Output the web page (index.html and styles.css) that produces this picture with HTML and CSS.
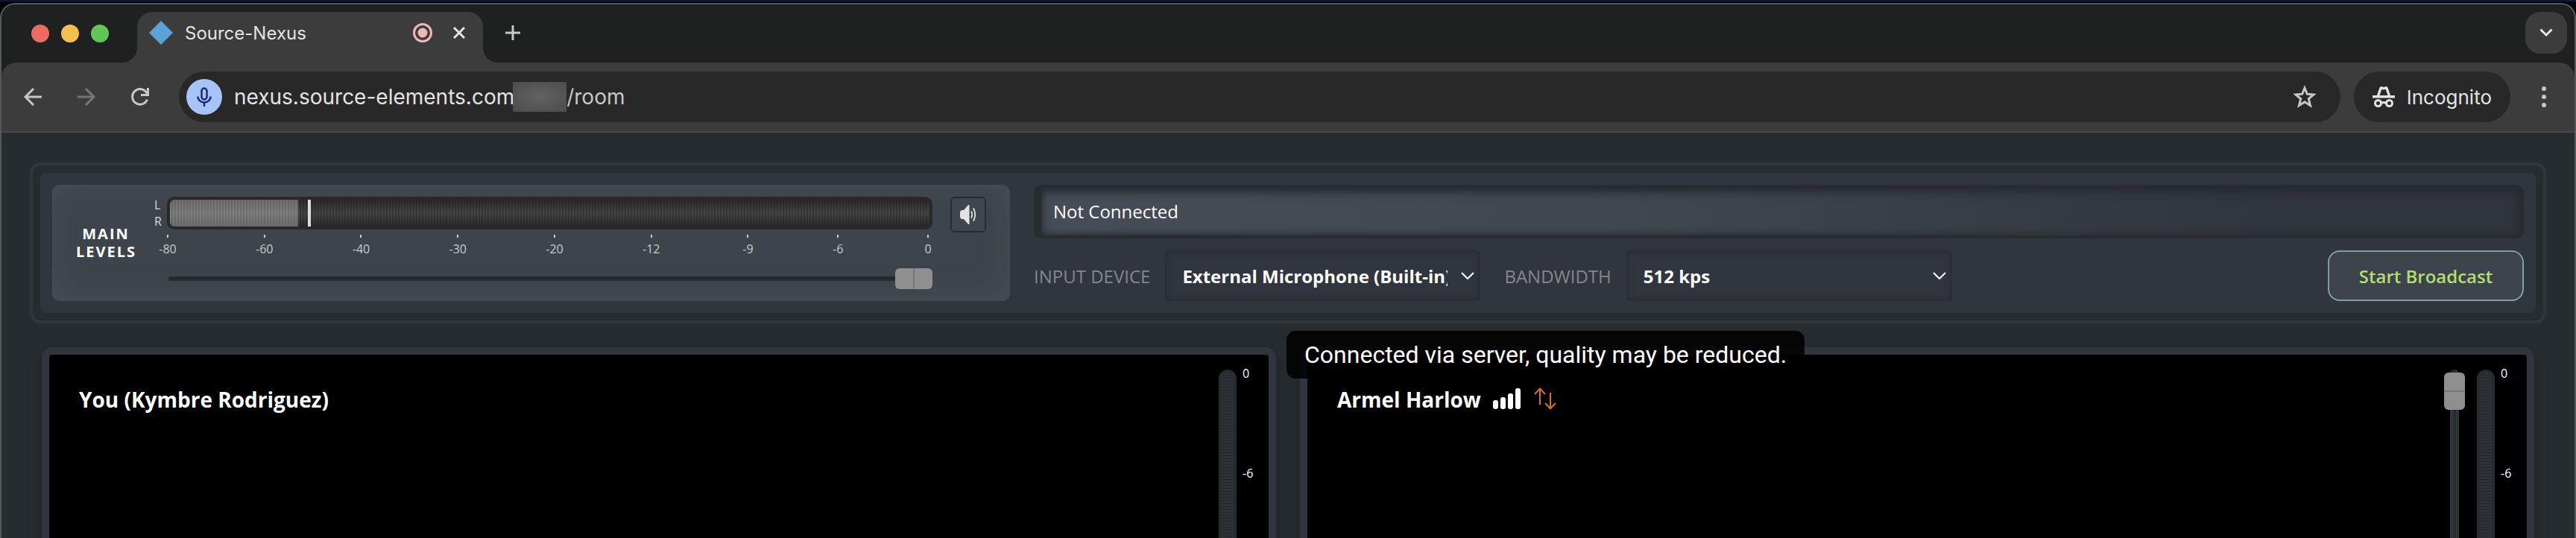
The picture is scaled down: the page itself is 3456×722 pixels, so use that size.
FILE: index.html
```html
<!DOCTYPE html>
<html lang="en">
<head>
  <meta charset="UTF-8">
  <title>Source-Nexus</title>
  <link rel="stylesheet" href="styles.css">
</head>
<body>
  <div class="window">
    <header class="tabstrip">
      <div class="lights">
        <span class="light red"></span>
        <span class="light yellow"></span>
        <span class="light green"></span>
      </div>
      <div class="tab">
        <svg class="favicon" width="32" height="32" viewBox="0 0 32 32"><path d="M16 0L32 16L16 32L0 16Z" fill="#5ba2d8"/></svg>
        <span class="tab-title">Source-Nexus</span>
        <svg width="26" height="26" viewBox="0 0 26 26"><circle cx="13" cy="13" r="11.5" fill="none" stroke="#f0b8b4" stroke-width="3"/><circle cx="13" cy="13" r="6.5" fill="#f0b8b4"/></svg>
        <button class="icon-btn tab-close" aria-label="Close tab">
          <svg width="16" height="16" viewBox="0 0 16 16" stroke="#e3e3e3" stroke-width="3"><path d="M1 1L15 15M15 1L1 15"/></svg>
        </button>
      </div>
      <button class="icon-btn new-tab" aria-label="New tab">
        <svg width="20" height="20" viewBox="0 0 20 20" stroke="#c7c7c7" stroke-width="3"><path d="M10 0V20M0 10H20"/></svg>
      </button>
      <button class="tab-search" aria-label="Search tabs">
        <svg width="18" height="12" viewBox="0 0 18 12" fill="none" stroke="#e3e3e3" stroke-width="3"><path d="M1.5 1.5L9 9L16.5 1.5"/></svg>
      </button>
    </header>

    <nav class="toolbar">
      <button class="icon-btn" aria-label="Back">
        <svg width="24" height="24" viewBox="0 0 24 24" fill="none" stroke="#c7c7c7" stroke-width="3"><path d="M24 12H2M13 1L2 12L13 23"/></svg>
      </button>
      <button class="icon-btn" aria-label="Forward">
        <svg width="24" height="24" viewBox="0 0 24 24" fill="none" stroke="#757575" stroke-width="3"><path d="M0 12H22M11 1L22 12L11 23"/></svg>
      </button>
      <button class="icon-btn" aria-label="Reload">
        <svg width="24" height="24" viewBox="0 0 24 24" fill="none" stroke="#c7c7c7" stroke-width="3"><path d="M21.5 15.5A10.3 10.3 0 1 1 21 7L22 9M22.5 0V9.5H13"/></svg>
      </button>
      <div class="omnibox">
        <span class="mic">
          <svg width="20" height="26" viewBox="0 0 20 26" fill="none" stroke="#14307a" stroke-width="2.5"><rect x="6.5" y="1.5" width="7" height="15" rx="3.5"/><path d="M1.5 12.5C1.5 23 18.5 23 18.5 12.5M10 20V26"/></svg>
        </span>
        <span class="url">nexus.source-elements.com<span class="masked"></span><span class="path">/room</span></span>
        <button class="icon-btn" aria-label="Bookmark">
          <svg width="32" height="32" viewBox="0 0 32 32" fill="none" stroke="#c7c7c7" stroke-width="3"><path d="M16 4L19.3 12.2L28 12.9L21.3 18.5L23.5 27.5L16 22.7L8.5 27.5L10.7 18.5L4 12.9L12.7 12.2Z"/></svg>
        </button>
      </div>
      <div class="incognito">
        <svg width="30" height="28" viewBox="0 0 30 28"><path d="M0 12H30V15.5H0ZM6 12L9.5 1.5Q10 0 12 0L15 1L18 0Q20 0 20.5 1.5L24 12H20.5L17.7 3.7L15 4.5L12.3 3.7L9.5 12Z" fill="#e3e3e3"/><g fill="none" stroke="#e3e3e3" stroke-width="3"><circle cx="7.5" cy="22.5" r="4"/><circle cx="22.5" cy="22.5" r="4"/><path d="M11 22.5Q15 20.5 19 22.5"/></g></svg>
        <span>Incognito</span>
      </div>
      <button class="icon-btn menu" aria-label="Menu">
        <svg width="6" height="28" viewBox="0 0 6 28" fill="#c7c7c7"><circle cx="3" cy="3" r="3"/><circle cx="3" cy="14" r="3"/><circle cx="3" cy="25" r="3"/></svg>
      </button>
    </nav>

    <main class="page">
      <section class="console">
        <div class="console-inner">
          <div class="levels">
            <h2>MAIN LEVELS</h2>
            <div class="channels"><span>L</span><span>R</span></div>
            <div class="level-controls">
              <div class="meter">
                <div class="meter-fill"></div>
                <div class="meter-peak"></div>
              </div>
              <div class="scale">
                <span>-80</span><span>-60</span><span>-40</span><span>-30</span><span>-20</span><span>-12</span><span>-9</span><span>-6</span><span>0</span>
              </div>
              <input class="volume" type="range" min="0" max="100" value="100" aria-label="Main volume">
            </div>
            <button class="mute" aria-label="Mute">
              <svg width="22" height="26" viewBox="0 0 22 26"><path d="M0 11Q0 7 3 7H5L11 0H12.5V26H11L5 19H3Q0 19 0 15Z" fill="#e3e3e3"/><path d="M15 8.5Q17.5 13 15 17.5M18 4.5Q22.5 13 18 21.5" fill="none" stroke="#e3e3e3" stroke-width="1.8"/></svg>
            </button>
          </div>

          <div class="session">
            <div class="status">Not Connected</div>
            <div class="settings">
              <label for="device">INPUT DEVICE</label>
              <div class="dropdown device">
                <select id="device"><option>External Microphone (Built-in)</option></select>
                <svg width="18" height="10" viewBox="0 0 18 10" fill="none" stroke="#fff" stroke-width="2"><path d="M1 1L9 9L17 1"/></svg>
              </div>
              <label for="bandwidth">BANDWIDTH</label>
              <div class="dropdown bandwidth">
                <select id="bandwidth"><option>512 kps</option></select>
                <svg width="18" height="10" viewBox="0 0 18 10" fill="none" stroke="#fff" stroke-width="2"><path d="M1 1L9 9L17 1"/></svg>
              </div>
              <button class="broadcast">Start Broadcast</button>
            </div>
          </div>
        </div>
      </section>

      <section class="people">
        <article class="person">
          <h3>You (Kymbre Rodriguez)</h3>
          <div class="vmeter"></div>
          <div class="vscale"><span>0</span><span>-6</span></div>
        </article>
        <article class="person">
          <div class="tooltip" role="tooltip">Connected via server, quality may be reduced.</div>
          <h3>Armel Harlow</h3>
          <svg class="signal" width="37" height="28" viewBox="0 0 37 28" fill="#fff"><rect x="0" y="16" width="7" height="12" rx="3"/><rect x="10" y="12" width="7" height="16" rx="3"/><rect x="20" y="7" width="7" height="21" rx="3"/><rect x="30" y="0" width="7" height="28" rx="3"/></svg>
          <svg class="relay" width="30" height="30" viewBox="0 0 30 30" fill="none" stroke="#d5702b" stroke-width="2"><path d="M8 23V2M1 9L8 1.5L15 9M22 7V28M15 21L22 28.5L29 21"/></svg>
          <div class="fader"><span class="fader-thumb"></span></div>
          <div class="vmeter"></div>
          <div class="vscale"><span>0</span><span>-6</span></div>
        </article>
      </section>
    </main>
  </div>
</body>
</html>
```
FILE: styles.css
```css
* {
  box-sizing: border-box;
}

body {
  margin: 0;
  padding-top: 4px;
  height: 100vh;
  overflow: hidden;
  background: linear-gradient(#07193d 0 2px, #000 2px 30px, #272c30 30px);
  font-family: "Open Sans", "Noto Sans", sans-serif;
  color: #fff;
}

button {
  font: inherit;
  cursor: pointer;
}

svg {
  display: block;
  flex: none;
}

.window {
  height: 100%;
  display: flex;
  flex-direction: column;
  border: 2px solid #56595a;
  border-bottom: 0;
  border-radius: 20px 20px 0 0;
  background: #1f2120;
  overflow: hidden;
}

/* browser chrome */

.tabstrip {
  flex: none;
  display: flex;
  align-items: flex-start;
  height: 78px;
  padding: 10px 10px 0 40px;
  font-family: Inter, sans-serif;
}

.lights {
  display: flex;
  gap: 16px;
  margin: 17px 38px 0 0;
}

.light {
  width: 24px;
  height: 24px;
  border-radius: 50%;
}

.red { background: #ed6b60; }
.yellow { background: #f5bf4f; }
.green { background: #62c555; }

.tab {
  position: relative;
  display: flex;
  align-items: center;
  width: 464px;
  height: 68px;
  padding: 0 24px 12px 16px;
  border-radius: 20px 20px 0 0;
  background: #3c3c3c;
}

.tab::before,
.tab::after {
  content: "";
  position: absolute;
  bottom: 0;
  width: 20px;
  height: 20px;
}

.tab::before {
  right: 100%;
  background: radial-gradient(circle at 0 0, transparent 20px, #3c3c3c 20px);
}

.tab::after {
  left: 100%;
  background: radial-gradient(circle at 100% 0, transparent 20px, #3c3c3c 20px);
}

.tab-title {
  flex: 1;
  margin-left: 16px;
  font-size: 24px;
  color: #e3e3e3;
}

.icon-btn {
  display: flex;
  padding: 0;
  border: 0;
  background: none;
}

.tab-close {
  margin-left: 28px;
}

.new-tab {
  margin: 18px 0 0 30px;
}

.tab-search {
  display: flex;
  align-items: center;
  justify-content: center;
  width: 56px;
  height: 56px;
  margin-left: auto;
  padding: 0;
  border: 0;
  border-radius: 20px;
  background: #3c3c3c;
}

.toolbar {
  flex: none;
  display: flex;
  align-items: center;
  gap: 48px;
  height: 94px;
  padding: 0 38px 0 30px;
  border-bottom: 2px solid #48494a;
  border-radius: 20px 20px 0 0;
  background: #3c3c3c;
  font-family: Inter, sans-serif;
  color: #e3e3e3;
}

.omnibox {
  flex: 1;
  display: flex;
  align-items: center;
  gap: 16px;
  height: 68px;
  margin-left: -8px;
  padding: 0 32px 0 10px;
  border-radius: 34px;
  background: #282828;
  font-size: 28px;
}

.mic {
  display: flex;
  align-items: center;
  justify-content: center;
  width: 48px;
  height: 48px;
  border-radius: 50%;
  background: #a8c3f7;
}

.url {
  flex: 1;
  display: flex;
  align-items: center;
}

.masked {
  width: 72px;
  height: 40px;
  margin-left: -2px;
  background: radial-gradient(#626262, #4c4c4c);
}

.path {
  color: #c7c7c7;
}

.incognito {
  display: flex;
  align-items: center;
  gap: 16px;
  height: 68px;
  margin-left: -30px;
  padding: 0 25px;
  border-radius: 34px;
  background: #282828;
  font-size: 26px;
}

.menu {
  margin-left: -6px;
}

/* room */

.page {
  flex: 1;
  padding: 40px 38px 0;
  background: #272c30;
}

.console {
  padding: 10px;
  border: 4px solid #32373c;
  border-radius: 14px;
}

.console-inner {
  display: flex;
  gap: 32px;
  padding: 16px;
  border-radius: 8px;
  background: #31353e;
}

.levels {
  display: flex;
  width: 1285px;
  height: 156px;
  padding: 16px 32px;
  border-radius: 10px;
  background: #3e444b;
  box-shadow: inset 0 0 40px #4a4e57;
}

.levels h2 {
  align-self: center;
  width: 80px;
  margin: 0;
  font-size: 20px;
  font-weight: 700;
  line-height: 24px;
  letter-spacing: 2px;
  text-align: center;
}

.channels {
  display: flex;
  flex-direction: column;
  width: 9px;
  margin: 0 8px 0 25px;
  font-size: 16px;
  line-height: 22px;
  color: #d8d8d8;
}

.level-controls {
  flex: 1;
}

.meter {
  display: flex;
  height: 44px;
  border: 4px solid #292929;
  border-radius: 10px;
  background:
    repeating-linear-gradient(90deg, transparent 0 2px, rgba(0, 0, 0, 0.15) 2px 4px),
    linear-gradient(#2a2a2a, #444 50%, #2a2a2a);
  overflow: hidden;
}

.meter-fill {
  width: 172px;
  background:
    repeating-linear-gradient(90deg, transparent 0 2px, rgba(0, 0, 0, 0.12) 2px 4px),
    linear-gradient(#6e6e6e, #808080 50%, #6e6e6e);
}

.meter-peak {
  width: 4px;
  margin-left: 13px;
  background: #dcdcdc;
}

.scale {
  display: grid;
  grid-template-columns: repeat(6, 130fr) repeat(2, 121fr) 24px;
  margin: 7px -6px 0 -11px;
  font-size: 16px;
  line-height: 30px;
  color: #c9cacc;
}

.scale span {
  width: 24px;
  text-align: center;
  white-space: nowrap;
}

.scale span::before {
  content: "";
  display: block;
  width: 2px;
  height: 4px;
  margin: 0 auto;
  background: #c9cacc;
}

.volume {
  -webkit-appearance: none;
  appearance: none;
  display: block;
  width: calc(100% - 2px);
  height: 28px;
  margin: 11px 0 0 2px;
  background: none;
}

.volume::-webkit-slider-runnable-track {
  height: 6px;
  border-radius: 3px;
  background: #272c30;
}

.volume::-webkit-slider-thumb {
  -webkit-appearance: none;
  width: 50px;
  height: 28px;
  margin-top: -11px;
  border-radius: 6px;
  background: linear-gradient(90deg, transparent 24px, #777 24px 26px, transparent 26px), #8f8f8f;
}

.mute {
  display: flex;
  align-items: center;
  justify-content: center;
  width: 48px;
  height: 48px;
  margin-left: 24px;
  padding: 0;
  border: 2px solid #272c30;
  border-radius: 6px;
  background: #41464e;
}

.session {
  flex: 1;
}

.status {
  height: 72px;
  padding: 0 16px;
  border: 4px solid #272c30;
  border-left-width: 10px;
  border-radius: 10px;
  background: linear-gradient(100deg, #464d56, #40474f 40%, #30343c 85%);
  box-shadow: inset 0 6px 12px #272b31, inset -2px -2px 8px #2c3033;
  font-size: 24px;
  line-height: 64px;
}

.settings {
  display: flex;
  align-items: center;
  margin-top: 16px;
  font-size: 24px;
}

.settings label {
  font-weight: 500;
  color: #84878c;
}

.dropdown {
  position: relative;
  margin: 0 32px 0 20px;
}

.dropdown.device {
  width: 423px;
}

.dropdown.bandwidth {
  width: 437px;
}

.dropdown select {
  appearance: none;
  display: block;
  width: 100%;
  height: 68px;
  padding: 0 44px 0 23px;
  border: 0;
  border-radius: 6px;
  background: #31353e;
  box-shadow: inset 0 0 10px #25292c;
  font: bold 24px "Open Sans", "Noto Sans", sans-serif;
  color: #fff;
}

.dropdown svg {
  position: absolute;
  top: 29px;
  right: 8px;
  pointer-events: none;
}

.broadcast {
  width: 263px;
  height: 68px;
  margin-left: auto;
  border: 2px solid #839ca9;
  border-radius: 16px;
  background: #3e444b;
  font-weight: 600;
  color: #b2df70;
}

.people {
  display: grid;
  grid-template-columns: 1fr 1fr;
  gap: 32px;
  margin: 32px 16px 0;
}

.person {
  position: relative;
  display: flex;
  align-items: flex-start;
  height: 400px;
  padding: 20px 14px 0 40px;
  border: 10px solid #31353e;
  border-radius: 14px;
  background: #000;
  box-shadow: 0 10px 20px rgba(0, 0, 0, 0.2);
}

.person h3 {
  margin: 20px 0 0;
  font-size: 28px;
  line-height: 40px;
}

.signal {
  margin: 25px 0 0 16px;
}

.relay {
  margin: 24px 0 0 18px;
}

.fader {
  width: 12px;
  height: 100%;
  margin: 0 24px 0 auto;
  padding-top: 4px;
  border-radius: 6px;
  background: linear-gradient(90deg, #31353e 4px, #272c30 4px 8px, #31353e 8px);
}

.fader-thumb {
  display: block;
  width: 28px;
  height: 50px;
  margin-left: -8px;
  border-radius: 6px;
  background: linear-gradient(transparent 24px, #777 24px 26px, transparent 26px), #8f8f8f;
}

.vmeter {
  width: 24px;
  height: 100%;
  border: 4px solid #272c30;
  border-radius: 12px;
  background: repeating-linear-gradient(#2d3236 0 3px, #23272b 3px 4px);
}

.person h3 + .vmeter {
  margin-left: auto;
}

.vscale {
  display: flex;
  flex-direction: column;
  gap: 112px;
  width: 21px;
  margin: -6px 0 0 8px;
  font-size: 16px;
  line-height: 22px;
}

.tooltip {
  position: absolute;
  top: -32px;
  left: -28px;
  padding: 0 24px;
  border-radius: 12px;
  background: rgba(0, 0, 0, 0.87);
  font-family: Roboto, sans-serif;
  font-size: 32px;
  line-height: 64px;
}
```
